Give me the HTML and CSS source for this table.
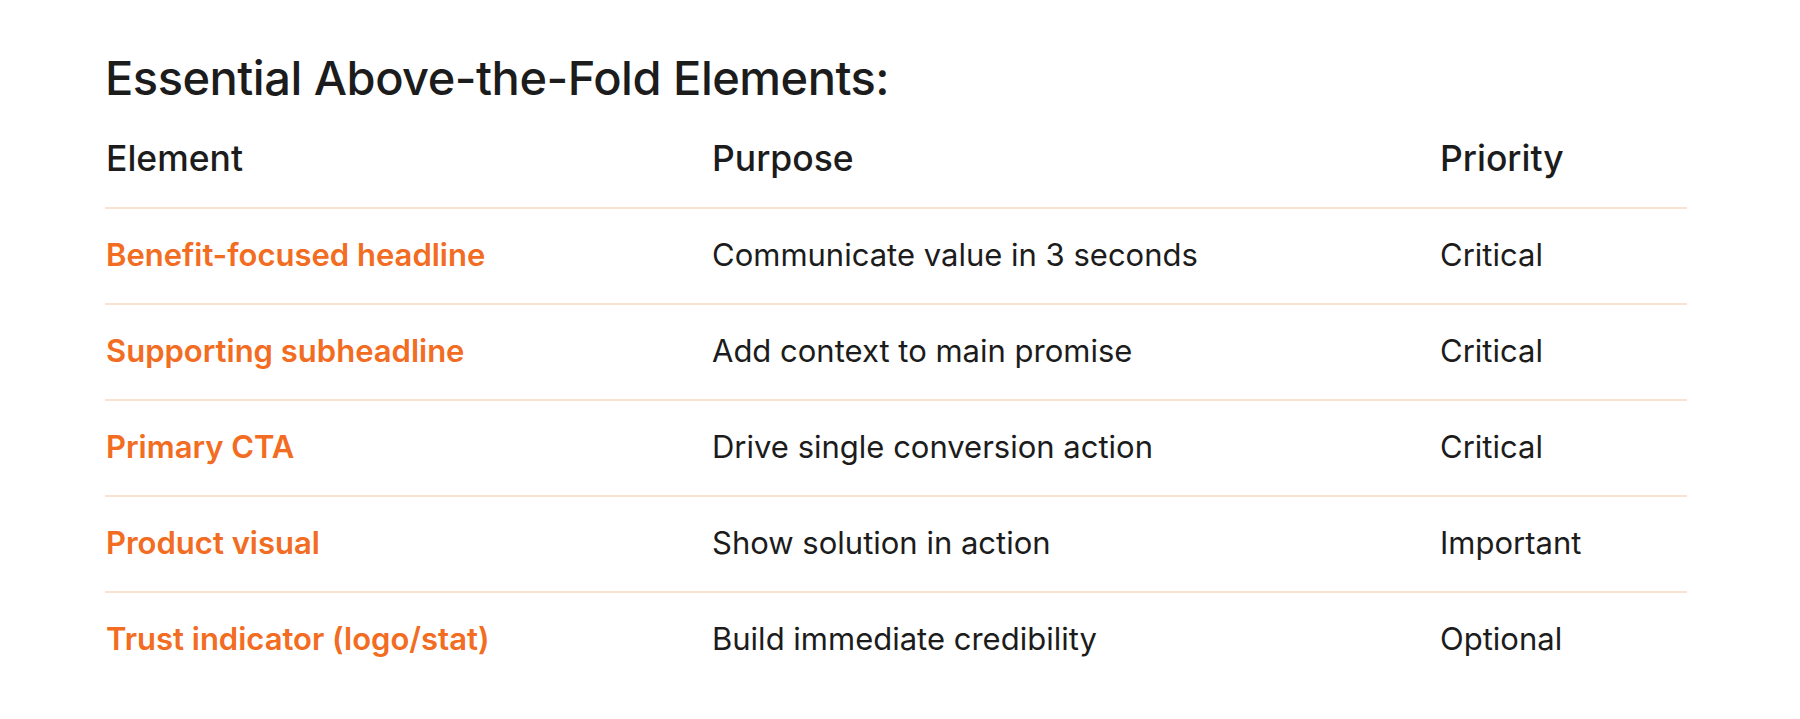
FILE: index.html
```html
<!DOCTYPE html>
<html>
<head>
<meta charset="utf-8">
<link rel="stylesheet" href="styles.css">
</head>
<body>
<main class="page">
  <h2 class="title">Essential Above-the-Fold Elements:</h2>
  <table class="grid">
    <thead>
      <tr><th class="c1">Element</th><th class="c2">Purpose</th><th class="c3">Priority</th></tr>
    </thead>
    <tbody>
      <tr><td class="name">Benefit-focused headline</td><td>Communicate value in 3 seconds</td><td>Critical</td></tr>
      <tr><td class="name">Supporting subheadline</td><td>Add context to main promise</td><td>Critical</td></tr>
      <tr><td class="name">Primary CTA</td><td>Drive single conversion action</td><td>Critical</td></tr>
      <tr><td class="name">Product visual</td><td>Show solution in action</td><td>Important</td></tr>
      <tr><td class="name">Trust indicator (logo/stat)</td><td>Build immediate credibility</td><td>Optional</td></tr>
    </tbody>
  </table>
</main>
</body>
</html>
```

FILE: styles.css
```css
html, body {
  margin: 0;
  padding: 0;
  background: #ffffff;
}
body {
  font-family: Inter, "Noto Sans", "Liberation Sans", sans-serif;
  color: #1c1c1c;
}
.page {
  padding: 53px 0 0 105px;
  width: 1582px;
}
.title {
  margin: 0 0 7px 0;
  font-size: 47px;
  line-height: 50px;
  font-weight: 500;
  letter-spacing: -0.5px;
  color: #1c1c1c;
}
.grid {
  width: 1582px;
  border-collapse: collapse;
  table-layout: fixed;
}
.grid th, .grid td {
  text-align: left;
  padding: 0 0 0 1px;
  vertical-align: middle;
}
.grid th {
  height: 97px;
  font-size: 35.5px;
  font-weight: 500;
  border-bottom: 2px solid #fde0d4;
}
.c1 { width: 605px; }
.c2 { width: 727px; }
.grid td {
  height: 91px;
  padding-bottom: 3px;
  font-size: 31px;
  font-weight: 400;
  border-bottom: 2px solid #fde0d4;
}
.grid tbody tr:last-child td {
  border-bottom: none;
}
.grid td.name {
  color: #f26c22;
  font-weight: 600;
}
```
